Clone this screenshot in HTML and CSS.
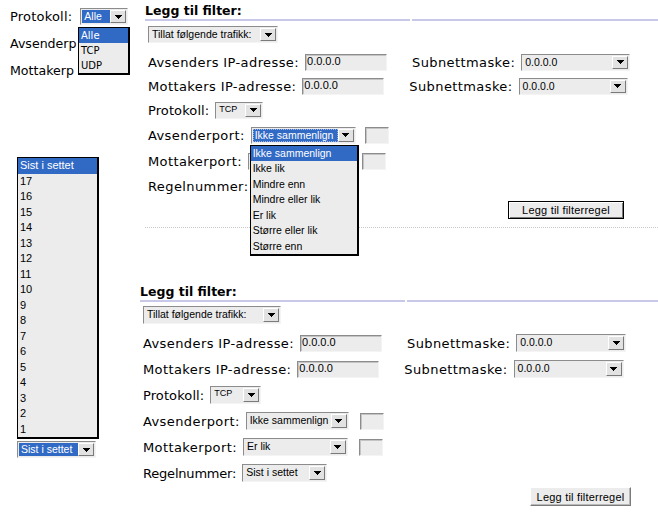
FILE: index.html
```html
<!DOCTYPE html>
<html lang="no">
<head>
  <meta charset="UTF-8">
  <title>Legg til filter</title>
  <link rel="stylesheet" href="styles.css">
</head>
<body>
<div class="page">

  <aside class="side">
    <div class="mini">
      <div class="mini-row">
        <span>Protokoll:</span>
        <div class="combo w-proto-mini">
          <span class="val on">Alle</span>
          <span class="btn"><svg width="7" height="4" viewBox="0 0 7 4" shape-rendering="crispEdges"><path d="M0 0h7v1h-1v1h-1v1h-1v1h-1v-1h-1v-1h-1v-1h-1z"/></svg></span>
        </div>
      </div>
      <div class="mini-row"><span class="cut">Avsenderp</span></div>
      <div class="mini-row"><span class="cut">Mottakerp</span></div>
      <div class="drop drop-proto">
        <div class="opt on">Alle</div>
        <div class="opt">TCP</div>
        <div class="opt">UDP</div>
      </div>
    </div>

    <div class="rulepick">
      <ul class="list">
        <li class="on">Sist i settet</li>
        <li>17</li><li>16</li><li>15</li><li>14</li><li>13</li><li>12</li>
        <li>11</li><li>10</li><li>9</li><li>8</li><li>7</li><li>6</li>
        <li>5</li><li>4</li><li>3</li><li>2</li><li>1</li>
      </ul>
      <div class="combo w-rule-side">
        <span class="val on">Sist i settet</span>
        <span class="btn"><svg width="7" height="4" viewBox="0 0 7 4" shape-rendering="crispEdges"><path d="M0 0h7v1h-1v1h-1v1h-1v1h-1v-1h-1v-1h-1v-1h-1z"/></svg></span>
      </div>
    </div>
  </aside>

  <main class="main">

    <section class="filter first">
      <div class="head"><h2>Legg til filter:</h2><span></span></div>
      <div class="combo traffic">
        <span class="val">Tillat følgende trafikk:</span>
        <span class="btn"><svg width="7" height="4" viewBox="0 0 7 4" shape-rendering="crispEdges"><path d="M0 0h7v1h-1v1h-1v1h-1v1h-1v-1h-1v-1h-1v-1h-1z"/></svg></span>
      </div>
      <div class="rows">
        <div class="row">
          <span>Avsenders IP-adresse:</span>
          <input class="field ip" value="0.0.0.0" readonly>
          <span class="mask">Subnettmaske:</span>
          <div class="combo w-mask">
            <span class="val">0.0.0.0</span>
            <span class="btn"><svg width="7" height="4" viewBox="0 0 7 4" shape-rendering="crispEdges"><path d="M0 0h7v1h-1v1h-1v1h-1v1h-1v-1h-1v-1h-1v-1h-1z"/></svg></span>
          </div>
        </div>
        <div class="row">
          <span>Mottakers IP-adresse:</span>
          <input class="field ip" value="0.0.0.0" readonly>
          <span class="mask">Subnettmaske:</span>
          <div class="combo w-mask">
            <span class="val">0.0.0.0</span>
            <span class="btn"><svg width="7" height="4" viewBox="0 0 7 4" shape-rendering="crispEdges"><path d="M0 0h7v1h-1v1h-1v1h-1v1h-1v-1h-1v-1h-1v-1h-1z"/></svg></span>
          </div>
        </div>
        <div class="row">
          <span class="snug">Protokoll:</span>
          <div class="combo w-proto">
            <span class="val tiny">TCP</span>
            <span class="btn"><svg width="7" height="4" viewBox="0 0 7 4" shape-rendering="crispEdges"><path d="M0 0h7v1h-1v1h-1v1h-1v1h-1v-1h-1v-1h-1v-1h-1z"/></svg></span>
          </div>
        </div>
        <div class="row tall">
          <span>Avsenderport:</span>
          <div class="combo pick w-port">
            <span class="val on focus">Ikke sammenlign</span>
            <span class="btn"><svg width="7" height="4" viewBox="0 0 7 4" shape-rendering="crispEdges"><path d="M0 0h7v1h-1v1h-1v1h-1v1h-1v-1h-1v-1h-1v-1h-1z"/></svg></span>
            <div class="drop drop-cmp">
              <div class="opt on">Ikke sammenlign</div>
              <div class="opt">Ikke lik</div>
              <div class="opt">Mindre enn</div>
              <div class="opt">Mindre eller lik</div>
              <div class="opt">Er lik</div>
              <div class="opt">Større eller lik</div>
              <div class="opt">Større enn</div>
            </div>
          </div>
          <input class="field port" readonly>
        </div>
        <div class="row tall">
          <span>Mottakerport:</span>
          <div class="combo w-port">
            <span class="val"></span>
            <span class="btn"></span>
          </div>
          <input class="field port" readonly>
        </div>
        <div class="row">
          <span>Regelnummer:</span>
          <div class="combo w-rule">
            <span class="val"></span>
            <span class="btn"></span>
          </div>
        </div>
      </div>
      <button class="add default">Legg til filterregel</button>
    </section>

    <div class="dots"></div>

    <section class="filter second">
      <div class="head"><h2>Legg til filter:</h2><span></span></div>
      <div class="combo traffic">
        <span class="val">Tillat følgende trafikk:</span>
        <span class="btn"><svg width="7" height="4" viewBox="0 0 7 4" shape-rendering="crispEdges"><path d="M0 0h7v1h-1v1h-1v1h-1v1h-1v-1h-1v-1h-1v-1h-1z"/></svg></span>
      </div>
      <div class="rows">
        <div class="row">
          <span>Avsenders IP-adresse:</span>
          <input class="field ip" value="0.0.0.0" readonly>
          <span class="mask">Subnettmaske:</span>
          <div class="combo w-mask">
            <span class="val">0.0.0.0</span>
            <span class="btn"><svg width="7" height="4" viewBox="0 0 7 4" shape-rendering="crispEdges"><path d="M0 0h7v1h-1v1h-1v1h-1v1h-1v-1h-1v-1h-1v-1h-1z"/></svg></span>
          </div>
        </div>
        <div class="row">
          <span>Mottakers IP-adresse:</span>
          <input class="field ip" value="0.0.0.0" readonly>
          <span class="mask">Subnettmaske:</span>
          <div class="combo w-mask">
            <span class="val">0.0.0.0</span>
            <span class="btn"><svg width="7" height="4" viewBox="0 0 7 4" shape-rendering="crispEdges"><path d="M0 0h7v1h-1v1h-1v1h-1v1h-1v-1h-1v-1h-1v-1h-1z"/></svg></span>
          </div>
        </div>
        <div class="row">
          <span class="snug">Protokoll:</span>
          <div class="combo w-proto">
            <span class="val tiny">TCP</span>
            <span class="btn"><svg width="7" height="4" viewBox="0 0 7 4" shape-rendering="crispEdges"><path d="M0 0h7v1h-1v1h-1v1h-1v1h-1v-1h-1v-1h-1v-1h-1z"/></svg></span>
          </div>
        </div>
        <div class="row">
          <span>Avsenderport:</span>
          <div class="combo w-port">
            <span class="val">Ikke sammenlign</span>
            <span class="btn"><svg width="7" height="4" viewBox="0 0 7 4" shape-rendering="crispEdges"><path d="M0 0h7v1h-1v1h-1v1h-1v1h-1v-1h-1v-1h-1v-1h-1z"/></svg></span>
          </div>
          <input class="field port" readonly>
        </div>
        <div class="row">
          <span>Mottakerport:</span>
          <div class="combo w-port2">
            <span class="val">Er lik</span>
            <span class="btn"><svg width="7" height="4" viewBox="0 0 7 4" shape-rendering="crispEdges"><path d="M0 0h7v1h-1v1h-1v1h-1v1h-1v-1h-1v-1h-1v-1h-1z"/></svg></span>
          </div>
          <input class="field port" readonly>
        </div>
        <div class="row">
          <span class="narrow">Regelnummer:</span>
          <div class="combo w-rule">
            <span class="val">Sist i settet</span>
            <span class="btn"><svg width="7" height="4" viewBox="0 0 7 4" shape-rendering="crispEdges"><path d="M0 0h7v1h-1v1h-1v1h-1v1h-1v-1h-1v-1h-1v-1h-1z"/></svg></span>
          </div>
        </div>
      </div>
      <button class="add">Legg til filterregel</button>
    </section>

  </main>
</div>
</body>
</html>
```

FILE: styles.css
```css
:root {
  --hl: #316ac5;
  --field: #ececec;
  --rule: #c8c8e8;
  --dark-edge: #8c8c8c;
  --light-edge: #f4f4f4;
}

* {
  box-sizing: border-box;
}

body {
  margin: 0;
  background: #fff;
  color: #000;
  font-family: "DejaVu Sans", Verdana, sans-serif;
}

.page {
  display: flex;
  width: 658px;
  height: 517px;
  overflow: hidden;
}

/* left column: two cropped fragments */
.side {
  width: 140px;
  flex: none;
}

.mini {
  position: relative;
  padding: 3px 0 0 10px;
}

.mini-row {
  display: flex;
  align-items: center;
  gap: 8px;
  height: 27px;
  font-size: 13px;
  letter-spacing: 0.2px;
  white-space: nowrap;
}

.mini-row .cut {
  font-size: 12.6px;
  letter-spacing: 0;
}

.rulepick {
  margin: 73px 0 0 17px;
}

.list {
  width: 82px;
  margin: 0 0 2px;
  padding: 0;
  list-style: none;
  background: var(--field);
  border: solid #000;
  border-width: 1px 2px 2px 1px;
  font: 11px "Liberation Sans", Arial, sans-serif;
}

.list li {
  height: 15.5px;
  line-height: 15.5px;
  padding-left: 2px;
}

/* combo boxes */
.combo {
  display: flex;
  flex: none;
  height: 17px;
  padding: 1px;
  background: var(--field);
  border: 1px solid;
  border-color: var(--dark-edge) var(--light-edge) var(--light-edge) var(--dark-edge);
  font: 10.5px "Liberation Sans", Arial, sans-serif;
  letter-spacing: 0;
}

.combo .val {
  flex: 1;
  padding: 0 2px;
  line-height: 13px;
  white-space: nowrap;
  overflow: hidden;
}

.combo .val.tiny {
  font-size: 9px;
  line-height: 11px;
}

.on {
  background: var(--hl);
  color: #fff;
}

.val.focus {
  outline: 1px dotted #9fb4de;
  outline-offset: -1px;
}

.combo .btn {
  width: 16px;
  flex: none;
  display: flex;
  align-items: center;
  justify-content: center;
  background: #e2e2e2;
  border: 1px solid;
  border-color: #fff #7a7a7a #7a7a7a #fff;
}

.pick {
  position: relative;
}

/* opened option lists */
.drop {
  position: absolute;
  z-index: 2;
  display: flex;
  flex-direction: column;
  background: var(--field);
  border: solid #000;
  border-width: 1px 2px 2px 1px;
}

.drop .opt {
  padding-left: 2px;
  white-space: nowrap;
}

.drop-proto {
  top: 27px;
  left: 78px;
  width: 52px;
  font: 10px "DejaVu Sans", Verdana, sans-serif;
  letter-spacing: 0;
}

.drop-proto .opt {
  height: 15px;
  line-height: 15px;
}

.drop-cmp {
  top: calc(100% + 2px);
  left: -2px;
  width: 109px;
  font: 10.5px "Liberation Sans", Arial, sans-serif;
}

.drop-cmp .opt {
  height: 15.5px;
  line-height: 15.5px;
}

.w-proto-mini { width: 48px; }
.w-rule-side { width: 79px; }
.w-mask { width: 109px; }
.w-proto { width: 48px; }
.w-port { width: 105px; }
.w-port2 { width: 105px; }
.w-rule { width: 85px; }

/* filter sections */
.main {
  flex: 1;
  min-width: 0;
}

.filter {
  display: flex;
  flex-direction: column;
  align-items: flex-start;
}

.first {
  margin-left: 5px;
}

.second {
  margin-top: 53px;
}

.head {
  display: flex;
  gap: 2px;
  align-self: stretch;
  margin-top: 2px;
}

.head h2 {
  width: 265px;
  margin: 0;
  font: bold 12.5px/17px "DejaVu Sans", Verdana, sans-serif;
  border-bottom: 2px solid var(--rule);
}

.head span {
  flex: 1;
  border-bottom: 2px solid var(--rule);
}

.traffic {
  width: 130px;
  margin: 5px 0 0 3px;
}

.rows {
  align-self: stretch;
  margin-top: 7px;
  padding-left: 3px;
}

.row {
  display: flex;
  align-items: center;
  gap: 6px;
  height: 24px;
  font-size: 13px;
  letter-spacing: 0.4px;
  white-space: nowrap;
}

.row.tall {
  height: 26px;
}

.row .narrow {
  letter-spacing: -0.2px;
}

.row .snug {
  letter-spacing: 0.1px;
}

.mask {
  margin-left: 19px;
}

.field {
  height: 17px;
  margin: 0;
  padding: 0 1px 3px;
  background: var(--field);
  border: 1px solid;
  border-color: var(--dark-edge) var(--light-edge) var(--light-edge) var(--dark-edge);
  box-shadow: inset 1px 1px 0 #c4c4c4;
  font: 11px "Liberation Sans", Arial, sans-serif;
  letter-spacing: 0;
  color: #000;
  outline: none;
}

.field.ip {
  width: 82px;
}

.field.port {
  width: 24px;
  margin-left: 3px;
}

.add {
  align-self: flex-end;
  width: 116px;
  height: 18px;
  margin: 3px 34px 0 0;
  padding: 0;
  background: var(--field);
  border: 1px solid;
  border-color: #fff #7a7a7a #7a7a7a #fff;
  box-shadow: inset -1px -1px 0 #b8b8b8;
  font: 11px "Liberation Sans", Arial, sans-serif;
  letter-spacing: 0.2px;
  color: #000;
}

.add.default {
  border: 1px solid #000;
  box-shadow: inset 1px 1px 0 #fff, inset -1px -1px 0 #7a7a7a;
}

.dots {
  margin: 8px 0 0 5px;
  border-top: 1px dotted #c8c8c8;
}

/* second block is drawn slightly larger */
.second .traffic {
  width: 138px;
  height: 18px;
  margin-top: 4px;
}

.second .rows {
  margin-top: 6px;
}

.second .row {
  height: 26px;
}

.second .combo {
  height: 18px;
}

.second .w-mask { width: 110px; }
.second .w-proto { width: 51px; }
.second .w-port { width: 103px; }

.second .field.port {
  margin-left: 5px;
}

.second .add {
  width: 101px;
  height: 19px;
  margin: 1px 27px 0 0;
}
```
